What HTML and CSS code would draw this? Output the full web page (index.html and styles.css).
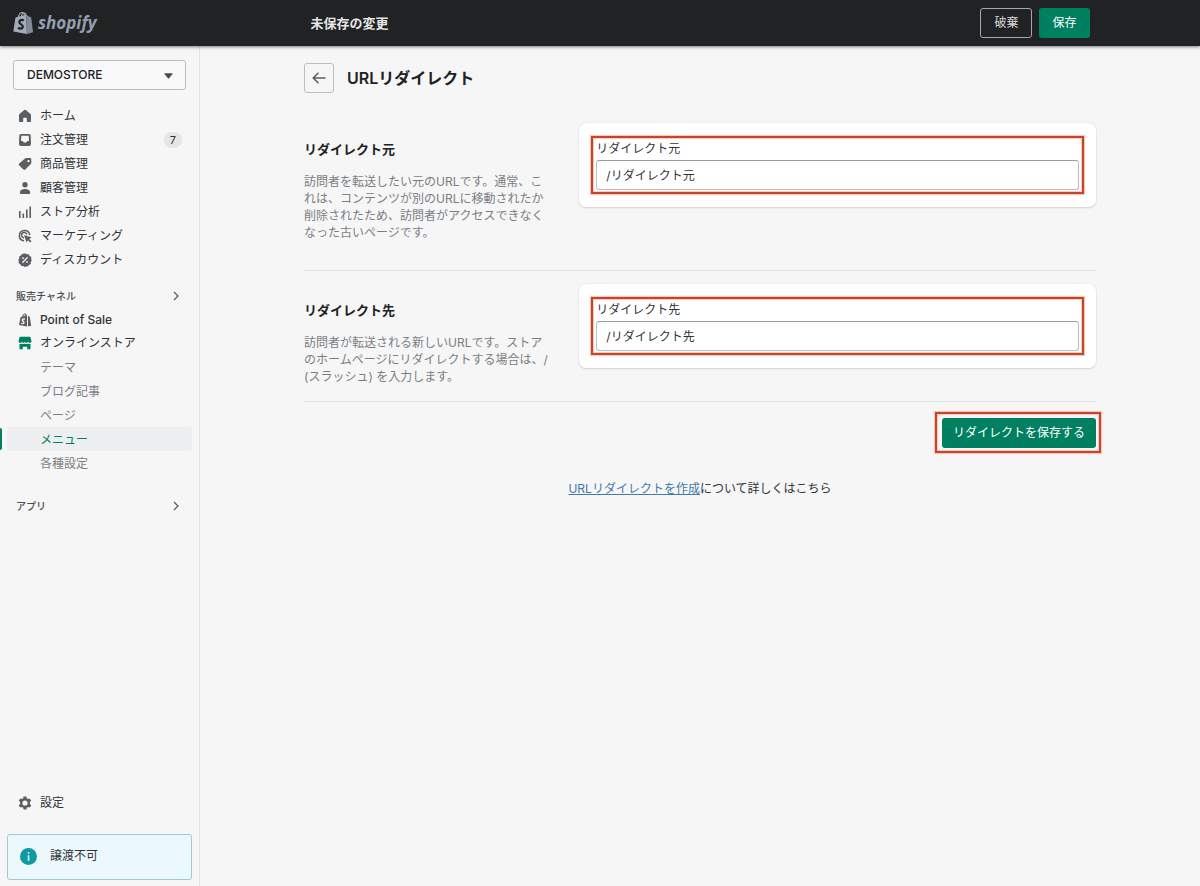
FILE: index.html
```html
<!DOCTYPE html>
<html lang="ja">
<head>
  <meta charset="UTF-8" />
  <meta name="viewport" content="width=device-width, initial-scale=1.0"/>
  <title>URLリダイレクト</title>
  <link rel="stylesheet" href="styles.css">
</head>
<body>
  <header class="topbar">
    <a href="#" class="logo">
      <svg class="logo-bag" viewBox="0 0 22 24">
        <path fill="#a3abb8" d="M2.6 6.2 14 3.2l.6 20.3L.3 21z"/>
        <path fill="#818b9b" d="M14.2 3.3 17 5.5l2 .3 2 15.9-6.2 1.8z"/>
        <path fill="none" stroke="#a3abb8" stroke-width="1.1" d="M5.4 6.5C6 3.200 7.600.9 9.500.9c1.700 0 2.500 1.800 2.500 4M8.500 5.400C9 3.200 10.200 1.600 11.700 1.600c1.300 0 1.900 1.200 2 2.600"/>
        <path fill="none" stroke="#202223" stroke-width="2.300" d="M11.300 9.300c-2-1-4.700-.5-4.700 1.700 0 2.600 4 2.400 3.700 5.200-.3 2.200-3.200 2.200-5 .7"/>
      </svg>
      <span class="logo-text">shopify</span>
    </a>
    <div class="savebar">
      <h2 class="savebar-title">未保存の変更</h2>
      <button type="button" class="btn btn-outline">破棄</button>
      <button type="button" class="btn btn-primary">保存</button>
    </div>
  </header>

  <div class="layout">
    <aside class="sidebar">
      <div class="store">
        <select class="store-select" aria-label="ストア">
          <option>DEMOSTORE</option>
        </select>
        <svg class="store-caret" viewBox="0 0 8 5"><path fill="#4a4d50" d="M.8 0h6.400q.8 0 .4.700L4.500 4.600q-.5.500-1 0L.4.700Q0 0 .8 0z"/></svg>
      </div>

      <nav>
        <ul class="nav">
          <li><a href="#" class="nav-item">
            <svg class="icon" viewBox="0 0 14 14"><path d="M7 .8q.4 0 .8.300l4.700 3.800q.5.400.5 1v6.300q0 .8-.8.800H9.500q-.7 0-.7-.7V9.600q0-.8-.8-.8H6q-.8 0-.8.800v2.700q0 .7-.7.700H1.800q-.8 0-.8-.8V5.900q0-.6.500-1L6.200 1.100Q6.600.8 7 .8z"/></svg>
            ホーム</a></li>
          <li><a href="#" class="nav-item">
            <svg class="icon" viewBox="0 0 14 14"><path fill-rule="evenodd" d="M3 1h8q1.600 0 1.700 1.600L13 11q0 2-2 2H3q-2 0-2-2l.3-8.400Q1.400 1 3 1zm.3 1.800L3 8h1.400q.5 0 .7.500.4 1 1 1h1.800q.6 0 1-1 .2-.5.7-.5H11l-.3-5.200z"/></svg>
            注文管理 <span class="badge">7</span></a></li>
          <li><a href="#" class="nav-item">
            <svg class="icon" viewBox="0 0 14 14"><path fill-rule="evenodd" d="M8.200 1H12q1.300 0 1.300 1.300V6q0 .6-.5 1.100l-5.500 5.500q-.9.900-1.800 0L1.200 8.400q-.9-.9 0-1.800l5.800-5.200Q7.500 1 8.200 1zm2.300 1.900a1.200 1.200 0 1 0 0 2.400 1.200 1.200 0 0 0 0-2.400z"/></svg>
            商品管理</a></li>
          <li><a href="#" class="nav-item">
            <svg class="icon" viewBox="0 0 14 14"><circle cx="7" cy="3.700" r="2.700"/><path d="M7 8c3 0 5.200 1.300 5.200 3.500 0 1-.7 1.500-1.500 1.500H3.300c-.8 0-1.500-.5-1.500-1.500C1.800 9.300 4 8 7 8z"/></svg>
            顧客管理</a></li>
          <li><a href="#" class="nav-item">
            <svg class="icon" viewBox="0 0 14 14"><path d="M1 6h1.600v7H1zM4.500 8.500h1.600V13H4.500zM8 4.500h1.600V13H8zM11.400 1.500H13V13h-1.600z"/></svg>
            ストア分析</a></li>
          <li><a href="#" class="nav-item">
            <svg class="icon" viewBox="0 0 14 14"><path fill="none" stroke="#5c5f62" stroke-width="1.500" stroke-linecap="round" d="M5.500 11.700A5.200 5.200 0 1 1 11.700 5.600M5.400 8.700A2.700 2.700 0 1 1 8.700 5"/><path d="m6 6 7.700 2.500-2.500 1.500 2.300 2.300-1.300 1.300-2.300-2.300-1.400 2.300z"/></svg>
            マーケティング</a></li>
          <li><a href="#" class="nav-item">
            <svg class="icon" viewBox="0 0 14 14"><path d="m7 .3 1.700 1 2-.1.900 1.800 1.700 1L13.200 6l.5 1.500-.9 1.500v2l-1.800.9-1 1.700-2-.1-1.500.5-1.200-.9-2-.1-.9-1.800-1.700-1 .1-2L.3 7l1-1.700-.1-2L3 2.400l1-1.700 2 .1z"/><path fill="none" stroke="#f6f6f7" stroke-width="1.300" stroke-linecap="round" d="m4.800 9.300 4.400-4.600"/><circle cx="5" cy="5.200" r=".9" fill="#f6f6f7"/><circle cx="9" cy="8.900" r=".9" fill="#f6f6f7"/></svg>
            ディスカウント</a></li>
        </ul>

        <a href="#" class="nav-heading">販売チャネル
          <svg class="chevron" viewBox="0 0 6 10"><path d="m1 1 4 4-4 4"/></svg></a>
        <ul class="nav nav-channels">
          <li><a href="#" class="nav-item">
            <svg class="icon" viewBox="0 0 14 14"><path fill-rule="evenodd" d="M2.500 4.200 4 3.700C4.500 1.700 5.700.4 7 .4c.8 0 1.400.6 1.600 1.800l.4-.1v11.500l-8-1.500zm2.800-.9 2.200-.7c-.1-.7-.3-1-.6-1-.7 0-1.300.7-1.600 1.700zM7 5.600c-1.900-.8-3.300.2-3.300 1.600 0 1.500 1.700 1.600 1.600 2.500-.1.700-1.100.5-2-.1l-.2 1.200c1.700 1 3.500.4 3.500-1.300 0-1.500-1.700-1.800-1.600-2.400.1-.5.900-.5 1.700-.2z"/><path d="m10 2.700 1.700 1 1.500 9-3.200.9z"/></svg>
            <span class="latin">Point of Sale</span></a></li>
          <li><a href="#" class="nav-item">
            <svg class="icon icon-green" viewBox="0 0 14 14"><path d="M1.700.8h10.600l1.200 4.400c0 1-.8 1.700-1.700 1.700S10.200 6.300 10 5.500c-.2.800-.8 1.400-1.600 1.400S7.200 6.300 7 5.500c-.2.800-.7 1.400-1.500 1.400S4.200 6.300 4 5.500c-.2.800-.9 1.400-1.800 1.400S.5 6.200.5 5.200z"/><path d="M1.500 8q1.200.2 2.400-.6Q5.500 8.600 7 7.500q1.500 1.100 3.100-.1 1.200.8 2.400.6v5.300H9.200v-2.500H4.800v2.500H1.500z"/></svg>
            オンラインストア</a></li>
        </ul>
        <ul class="nav subnav">
          <li><a href="#" class="nav-item">テーマ</a></li>
          <li><a href="#" class="nav-item">ブログ記事</a></li>
          <li><a href="#" class="nav-item">ページ</a></li>
          <li><a href="#" class="nav-item selected" aria-current="page">メニュー</a></li>
          <li><a href="#" class="nav-item">各種設定</a></li>
        </ul>

        <a href="#" class="nav-heading nav-apps">アプリ
          <svg class="chevron" viewBox="0 0 6 10"><path d="m1 1 4 4-4 4"/></svg></a>
      </nav>

      <div class="sidebar-bottom">
        <a href="#" class="nav-item">
          <svg class="icon" viewBox="0 0 14 14"><path fill-rule="evenodd" d="M5.600.5h2.800l.4 1.800 1.200.7 1.800-.6 1.400 2.400L11.900 6v2l1.300 1.200-1.400 2.400-1.800-.6-1.200.7-.4 1.800H5.600l-.4-1.800L4 11l-1.800.6L.8 9.200 2.100 8V6L.8 4.800l1.400-2.400L4 3l1.200-.7zM7 4.400a2.600 2.600 0 1 0 0 5.200 2.600 2.600 0 0 0 0-5.200z"/></svg>
          設定</a>
        <div class="notice">
          <svg class="notice-icon" viewBox="0 0 16 16"><circle cx="8" cy="8" r="8" fill="#109aa3"/><path fill="#e3f6fa" d="M7.300 4h1.500v1.500H7.300zM7.300 6.800h1.500V12H7.300z"/></svg>
          譲渡不可
        </div>
      </div>
    </aside>

    <main class="main">
      <div class="page">
        <div class="page-header">
          <button type="button" class="back" aria-label="戻る">
            <svg viewBox="0 0 14 12"><path d="M13 6H1.500M6 1.200 1.200 6 6 10.800"/></svg>
          </button>
          <h1>URLリダイレクト</h1>
        </div>

        <form>
          <section class="section section-from">
            <div class="annotation">
              <h2>リダイレクト元</h2>
              <p>訪問者を転送したい元のURLです。通常、これは、コンテンツが別のURLに移動されたか削除されたため、訪問者がアクセスできなくなった古いページです。</p>
            </div>
            <div class="card">
              <div class="highlight field">
                <label for="from">リダイレクト元</label>
                <input type="text" id="from" value="/リダイレクト元">
              </div>
            </div>
          </section>

          <section class="section section-to">
            <div class="annotation">
              <h2>リダイレクト先</h2>
              <p>訪問者が転送される新しいURLです。ストアのホームページにリダイレクトする場合は、/ (スラッシュ) を入力します。</p>
            </div>
            <div class="card">
              <div class="highlight field">
                <label for="to">リダイレクト先</label>
                <input type="text" id="to" value="/リダイレクト先">
              </div>
            </div>
          </section>

          <div class="actions">
            <div class="highlight highlight-button">
              <button type="button" class="btn btn-primary">リダイレクトを保存する</button>
            </div>
          </div>
        </form>

        <p class="help"><a href="#">URLリダイレクトを作成</a>について詳しくはこちら</p>
      </div>
    </main>
  </div>
</body>
</html>
```

FILE: styles.css
```css
* {
  box-sizing: border-box;
}

body {
  margin: 0;
  min-height: 100vh;
  display: flex;
  flex-direction: column;
  background: #f6f6f7;
  color: #303336;
  font-family: Inter, "Noto Sans CJK JP", sans-serif;
  font-size: 12px;
  line-height: 20px;
}

h1, h2, p, ul {
  margin: 0;
  padding: 0;
}

a {
  color: inherit;
  text-decoration: none;
}

button, input, select {
  font: inherit;
  color: inherit;
}

/* top bar */
.topbar {
  position: relative;
  display: flex;
  align-items: center;
  height: 46px;
  background: #202223;
  box-shadow: 0 1px 3px rgba(0, 0, 0, 0.5);
}

.logo {
  display: flex;
  align-items: center;
  gap: 4px;
  flex: 0 0 200px;
  padding-left: 13px;
}

.logo-bag {
  width: 21px;
  height: 24px;
}

.logo-text {
  color: #959eac;
  font-family: "Open Sans", sans-serif;
  font-size: 17px;
  font-style: italic;
  font-weight: 700;
}

.savebar {
  display: flex;
  align-items: center;
  flex: 1;
  gap: 7px;
  max-width: 779px;
  margin: 0 auto;
}

.savebar-title {
  margin-right: auto;
  color: #e3e5e7;
  font-size: 13px;
  font-weight: 600;
}

.btn {
  height: 30px;
  padding: 0 12px;
  border: 1px solid transparent;
  border-radius: 3px;
  line-height: 20px;
}

.btn-outline {
  padding: 0 13px;
  border-color: #a6a9ac;
  background: transparent;
  color: #d8dadc;
}

.btn-primary {
  background: #008060;
  color: #fff;
}

/* sidebar */
.layout {
  display: flex;
  flex: 1;
}

.sidebar {
  display: flex;
  flex-direction: column;
  flex: 0 0 200px;
  padding: 14px 7px 6px;
  border-right: 1px solid #e1e3e5;
}

.store {
  position: relative;
  margin: 0 6px 13px;
}

.store-select {
  width: 100%;
  height: 30px;
  padding: 0 13px;
  border: 1px solid #babfc3;
  border-radius: 3px;
  background: #f9f9fa;
  color: #202223;
  font-weight: 500;
  appearance: none;
}

.store-caret {
  position: absolute;
  top: 13px;
  right: 13px;
  width: 9px;
  height: 6px;
  pointer-events: none;
}

.nav {
  list-style: none;
}

.nav-item {
  position: relative;
  display: flex;
  align-items: center;
  gap: 8px;
  height: 24px;
  padding: 1px 10px 0 11px;
  border-radius: 3px;
  color: #303336;
}

.icon {
  width: 14px;
  height: 14px;
  fill: #5c5f62;
}

.icon-green {
  fill: #008060;
}

.badge {
  margin-left: auto;
  padding: 0 6px;
  border-radius: 8px;
  background: #e4e5e7;
  font-size: 11px;
  line-height: 16px;
}

.nav-heading {
  display: flex;
  align-items: center;
  justify-content: space-between;
  height: 24px;
  margin-top: 13px;
  padding: 0 13px 0 9px;
  color: #4a4d50;
  font-size: 10px;
  font-weight: 500;
}

.nav-apps {
  margin-top: 19px;
}

.chevron {
  width: 6px;
  height: 10px;
  fill: none;
  stroke: #5c5f62;
  stroke-width: 1.300;
}

.nav-channels .nav-item {
  height: 23px;
}

.latin {
  font-weight: 500;
}

.subnav {
  margin-top: 1px;
}

.subnav .nav-item {
  padding-left: 33px;
  color: #7a7e82;
}

.subnav .selected {
  background: #edeeef;
  color: #008060;
}

.selected::before {
  content: "";
  position: absolute;
  top: 1px;
  bottom: 1px;
  left: -7px;
  width: 2px;
  border-radius: 0 2px 2px 0;
  background: #008060;
}

.sidebar-bottom {
  margin-top: auto;
}

.notice {
  display: flex;
  align-items: center;
  gap: 13px;
  height: 46px;
  margin-top: 20px;
  padding: 0 12px 2px;
  border: 1px solid #a2c9cf;
  border-radius: 3px;
  background: #ebf9fc;
}

.notice-icon {
  width: 17px;
  height: 17px;
}

/* main page */
.main {
  flex: 1;
  padding: 17px 16px;
}

.page {
  max-width: 792px;
  margin: 0 auto;
}

.page-header {
  display: flex;
  align-items: center;
  gap: 13px;
  margin-bottom: 30px;
}

.page-header h1 {
  color: #202223;
  font-size: 16px;
  font-weight: 600;
}

.back {
  display: flex;
  align-items: center;
  justify-content: center;
  width: 30px;
  height: 30px;
  padding: 0;
  border: 1px solid #babfc3;
  border-radius: 3px;
  background: transparent;
}

.back svg {
  width: 14px;
  height: 12px;
  fill: none;
  stroke: #5c5f62;
  stroke-width: 1.600;
  stroke-linecap: round;
  stroke-linejoin: round;
}

.section {
  display: grid;
  grid-template-columns: 1fr 2fr;
  align-items: start;
  gap: 17px;
  border-bottom: 1px solid #e1e3e5;
}

.section-from {
  padding-bottom: 29px;
  margin-bottom: 13px;
}

.section-to {
  padding-bottom: 16px;
}

.annotation {
  padding: 16px 10px 0 0;
}

.annotation h2 {
  margin-bottom: 14px;
  color: #202223;
  font-size: 13px;
  font-weight: 600;
}

.annotation p {
  color: #7a7e82;
  line-height: 17px;
}

.card {
  padding: 13px 12px;
  border-radius: 7px;
  background: #fff;
  box-shadow: 0 0 2px rgba(23, 24, 24, 0.1), 0 1px 2px rgba(0, 0, 0, 0.12);
}

.highlight {
  border: 2px solid #c3452e;
  box-shadow: 0 0 1px 1px #f6c9b8, inset 0 0 1px 1px #f6c9b8;
}

.field {
  padding: 1px 3px 2px;
}

.field label {
  display: block;
  margin-bottom: 1px;
}

.field input {
  display: block;
  width: 100%;
  height: 30px;
  padding: 0 9px 2px;
  border: 1px solid #babfc3;
  border-top-color: #999ea4;
  border-radius: 3px;
  background: #fff;
}

.actions {
  display: flex;
  justify-content: flex-end;
  margin: 10px -5px 26px 0;
}

.highlight-button {
  padding: 4px 3px 3px 5px;
}

.highlight-button .btn {
  display: block;
  padding: 0 10px;
}

.help {
  text-align: center;
}

.help a {
  color: #4579a8;
  text-decoration: underline;
}
```
